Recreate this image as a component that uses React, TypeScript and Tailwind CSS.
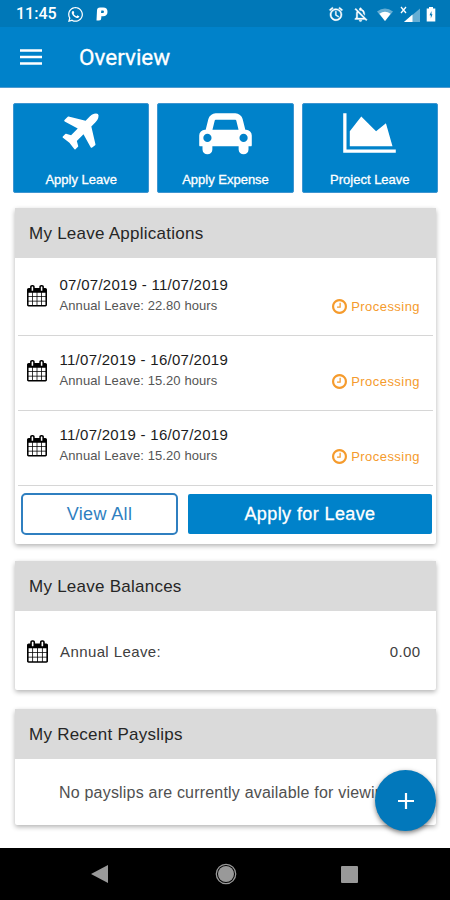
import React from "react";
import { FaWhatsapp } from "react-icons/fa";
import { MdAccessAlarm, MdOutlineNotificationsOff } from "react-icons/md";

const PLANE =
  "M1568 160q44 52 12 148t-108 172l-161 161 160 696q5 19-12 33l-128 96q-7 6-19 6-4 0-7-1-15-3-21-16l-279-508-259 259 53 194q5 17-8 31l-96 96q-9 9-23 9h-2q-15-2-24-13l-189-252-252-189q-11-7-13-23-1-13 9-25l96-97q9-9 23-9 6 0 8 1l194 53 259-259-508-279q-14-8-17-24-2-16 9-27l128-128q14-13 30-8l665 159 160-160q76-76 172-108t148 12z";
const CAR =
  "M480 1088q0-66-47-113t-113-47-113 47-47 113 47 113 113 47 113-47 47-113zm36-320h1016l-89-357q-2-8-14-17.5t-21-9.5h-768q-9 0-21 9.5t-14 17.5zm1372 320q0-66-47-113t-113-47-113 47-47 113 47 113 113 47 113-47 47-113zm160-96v384q0 14-9 23t-23 9h-96v128q0 80-56 136t-136 56-136-56-56-136v-128h-1024v128q0 80-56 136t-136 56-136-56-56-136v-128h-96q-14 0-23-9t-9-23v-384q0-93 65.5-158.5t158.5-65.5h28l105-419q23-94 104-157.5t179-63.5h768q98 0 179 63.5t104 157.5l105 419h28q93 0 158.5 65.5t65.5 158.5z";
const CHART =
  "M2048 1536v128h-2048v-1536h128v1408h1920zm-384-1024l256 896h-1664v-576l448-576 576 576z";
const CLOCK =
  "M1024 544v448q0 14-9 23t-23 9h-320q-14 0-23-9t-9-23v-64q0-14 9-23t23-9h224v-352q0-14 9-23t23-9h64q14 0 23 9t9 23zm416 352q0-148-73-273t-198-198-273-73-273 73-198 198-73 273 73 273 198 198 273 73 273-73 198-198 73-273zm224 0q0 209-103 385.5t-279.5 279.5-385.5 103-385.5-103-279.5-279.5-103-385.5 103-385.5 279.5-279.5 385.5-103 385.5 103 279.5 279.5 103 385.5z";
const CALENDAR =
  "M192 1664h288v-288h-288v288zm352 0h320v-288h-320v288zm-352-352h288v-320h-288v320zm352 0h320v-320h-320v320zm-352-384h288v-288h-288v288zm736 736h320v-288h-320v288zm-384-736h320v-288h-320v288zm768 736h288v-288h-288v288zm-384-352h320v-320h-320v320zm-352-864v-288q0-13-9.5-22.5t-22.5-9.5h-64q-13 0-22.5 9.5t-9.5 22.5v288q0 13 9.5 22.5t22.5 9.5h64q13 0 22.5-9.5t9.5-22.5zm736 864h288v-320h-288v320zm-384-384h320v-288h-320v288zm384 0h288v-288h-288v288zm32-480v-288q0-13-9.5-22.5t-22.5-9.5h-64q-13 0-22.5 9.5t-9.5 22.5v288q0 13 9.5 22.5t22.5 9.5h64q13 0 22.5-9.5t9.5-22.5zm384-64v1280q0 52-38 90t-90 38h-1408q-52 0-90-38t-38-90v-1280q0-52 38-90t90-38h128v-96q0-66 47-113t113-47h64q66 0 113 47t47 113v96h384v-96q0-66 47-113t113-47h64q66 0 113 47t47 113v96h128q52 0 90 38t38 90z";

const actions = [
  { label: "Apply Leave", path: PLANE, viewBox: "-96 0 2048 1792" },
  { label: "Apply Expense", path: CAR, viewBox: "0 0 2048 1792" },
  { label: "Project Leave", path: CHART, viewBox: "0 0 2048 1792" },
];

const applications = [
  { dates: "07/07/2019 - 11/07/2019", detail: "Annual Leave: 22.80 hours" },
  { dates: "11/07/2019 - 16/07/2019", detail: "Annual Leave: 15.20 hours" },
  { dates: "11/07/2019 - 16/07/2019", detail: "Annual Leave: 15.20 hours" },
];

const Calendar = ({ className }: { className: string }) => (
  <svg viewBox="64 0 1664 1792" className={className} fill="currentColor">
    <path d={CALENDAR} />
  </svg>
);

const StatusBar = () => (
  <div className="flex h-[27px] items-center bg-[#0078b8] pl-4 pr-[14px] pt-px text-white">
    <span className="w-[51px] font-[Roboto,sans-serif] text-[16px] font-medium leading-none">
      11:45
    </span>
    <FaWhatsapp className="size-[17px]" />
    <svg viewBox="0 0 12 14" className="ml-3 h-[14px] w-3">
      <path
        d="M1 3.5Q1 .5 4 .5h3.200Q11.500 .5 11.500 4.800T7 9.300H5.300V11Q5.300 13.500 3 13.500H.5z"
        fill="white"
      />
      <path d="M5.300 3.600h1.500a1.200 1.200 0 010 2.400H5z" fill="#0078b8" />
    </svg>
    <div className="ml-auto flex items-center">
      <MdAccessAlarm className="size-4 [&>path:first-child]:stroke-none" stroke="white" strokeWidth="0.700" />
      <MdOutlineNotificationsOff
        className="ml-[8px] size-[17px] [&>path:first-child]:stroke-none"
        stroke="white"
        strokeWidth="0.500"
      />
      <svg viewBox="0 0 16 13" className="ml-[8px] h-[13px] w-4">
        <path d="M0 3.500Q8-2.500 16 3.500L8 13z" fill="white" opacity=".4" />
        <path d="M2.400 5.700Q8 1.800 13.600 5.700L8 13z" fill="white" />
      </svg>
      <svg viewBox="0 0 20 17" className="ml-[7px] h-[17px] w-5">
        <path d="M20 2.500v13.500H4z" fill="white" opacity=".4" />
        <path d="M12.500 8.500v7.500H4z" fill="white" />
        <path d="M1 1l5 6M6 1L1 7" stroke="white" strokeWidth="1.300" />
      </svg>
      <svg viewBox="0 0 10 15" className="ml-[6px] h-[15px] w-[10px]">
        <path d="M3 0h4v1.500h2.300v13H.7v-13H3z" fill="white" />
        <path d="M5.500 4L3.500 8.300h1.300V11.500L6.500 7.300H5.500z" fill="#0078b8" />
      </svg>
    </div>
  </div>
);

const Card = ({
  title,
  className,
  children,
}: {
  title: string;
  className: string;
  children: React.ReactNode;
}) => (
  <section
    className={`ml-[15px] mr-[14px] flex flex-col rounded-[2px] bg-white shadow-[0_2px_5px_rgba(0,0,0,0.3)] ${className}`}
  >
    <h2 className="flex h-[50px] shrink-0 items-center bg-[#dadada] pl-[14px] pt-[2px] text-[17px] tracking-[0.25px] text-[#262626]">
      {title}
    </h2>
    {children}
  </section>
);

const App = () => {
  return (
    <div className="flex h-[900px] w-[450px] flex-col overflow-hidden bg-white font-['Liberation_Sans',Arial,sans-serif]">
      <StatusBar />

      <header className="flex h-[61px] items-center border-b border-[#4f9bd0] bg-[#0082ca] pl-5 text-white">
        <button aria-label="Menu">
          <svg viewBox="0 0 22 18" className="h-[18px] w-[22px]" stroke="white" strokeWidth="2.400">
            <path d="M0 2.500h22M0 9h22M0 15.500h22" />
          </svg>
        </button>
        <h1 className="ml-[37px] pt-px font-[Roboto,sans-serif] text-[22.500px] [-webkit-text-stroke:0.3px_white]">
          Overview
        </h1>
      </header>

      <main className="relative h-[760px]">
        {/* Quick actions */}
        <div className="grid grid-cols-3 gap-[8px] pl-[13px] pr-[12px] pt-[15px]">
          {actions.map((action) => (
            <button
              key={action.label}
              className="flex h-[90px] flex-col items-center rounded-[2px] border border-[#3d95d1] bg-[#0082ca] pt-[6px] text-white"
            >
              <svg viewBox={action.viewBox} className="h-[46px] w-[53px]" fill="currentColor">
                <path d={action.path} />
              </svg>
              <span className="mt-[15px] text-[13px] leading-[18px] [-webkit-text-stroke:0.3px_white]">
                {action.label}
              </span>
            </button>
          ))}
        </div>

        <Card title="My Leave Applications" className="mt-[15px] h-[336px]">
          <div className="px-[3px] pt-[3px]">
            {applications.map((item, i) => (
              <div key={i} className="flex h-[75px] border-b border-[#d6d6d6] pl-[9px] pr-[13px]">
                <Calendar className="mt-[24px] h-[21.500px] w-5 text-black" />
                <div className="ml-[12.500px] pt-[14px]">
                  <p className="text-[15px] leading-5 tracking-[0.27px] text-[#1c1c1c]">{item.dates}</p>
                  <p className="text-[13px] leading-[22px] tracking-[0.1px] text-[#555]">{item.detail}</p>
                </div>
                <div className="ml-auto mt-[35px] flex h-5 items-center gap-[4px] self-start text-[#f59b2d]">
                  <svg viewBox="128 128 1536 1536" className="size-[15px]" fill="currentColor">
                    <path d={CLOCK} />
                  </svg>
                  <span className="pt-px text-[13px] tracking-[0.45px]">Processing</span>
                </div>
              </div>
            ))}
          </div>
          <div className="flex gap-[10px] pl-[6px] pr-[4px] pt-[7px] text-[18px]">
            <button className="h-[42px] w-[157px] rounded-[5px] border-2 border-[#2f7fc0] pt-px tracking-[0.35px] text-[#2f7fc0]">
              View All
            </button>
            <button className="mt-px h-[40px] flex-1 rounded-[2px] bg-[#0082ca] pt-px tracking-[0.4px] text-white [-webkit-text-stroke:0.3px_white]">
              Apply for Leave
            </button>
          </div>
        </Card>

        <Card title="My Leave Balances" className="mt-[17px] h-[129px]">
          <div className="flex flex-1 items-center pl-3 pr-[15.500px] pt-[2px] text-[15px] tracking-[0.4px] text-[#404040]">
            <Calendar className="h-[23px] w-[21px] text-black" />
            <span className="ml-3 pt-px">Annual Leave:</span>
            <span className="ml-auto pt-px">0.00</span>
          </div>
        </Card>

        <Card title="My Recent Payslips" className="mt-[19px] h-[116px]">
          <p className="flex flex-1 items-center overflow-hidden whitespace-nowrap pl-[44px] pt-px text-[16px] tracking-[0.2px] text-[#505050]">
            No payslips are currently available for viewing
          </p>
        </Card>

        {/* Floating action button */}
        <button
          aria-label="Add"
          className="absolute bottom-[17px] right-[14px] flex size-[61px] items-center justify-center rounded-full bg-[#0278bb] shadow-[0_2px_5px_rgba(0,0,0,0.5)]"
        >
          <svg viewBox="0 0 16 16" className="size-4" stroke="white" strokeWidth="2.200">
            <path d="M0 8h16M8 0v16" />
          </svg>
        </button>
      </main>

      {/* Android navigation */}
      <nav className="flex h-[52px] items-center bg-black pl-[91px] text-[#999]">
        <svg viewBox="0 0 17 18" className="h-[18px] w-[17px]" fill="currentColor">
          <path d="M17 0v18L0 9z" />
        </svg>
        <svg viewBox="0 0 22 22" className="ml-[106.500px] size-[22px]" fill="currentColor">
          <circle cx="11" cy="11" r="8" />
          <circle cx="11" cy="11" r="9.700" fill="none" stroke="currentColor" strokeWidth="1.300" />
        </svg>
        <span className="ml-[104.500px] size-[17px] rounded-[1px] bg-[#999]" />
      </nav>
    </div>
  );
};

export default App;
